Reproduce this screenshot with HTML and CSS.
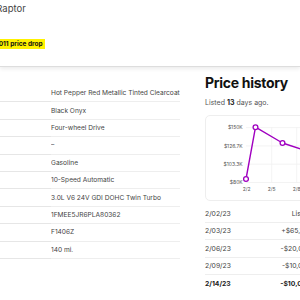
FILE: index.html
```html
<!DOCTYPE html>
<html lang="en">
<head>
    <meta charset="UTF-8">
    <meta name="viewport" content="width=device-width, initial-scale=1.0">
    <title>2023 Ford F-150 Raptor</title>
    <link rel="stylesheet" href="styles.css">
</head>
<body>
    <header class="topbar">
        <div class="title">2023 Ford F-150 Raptor</div>
        <div class="badge-row"><span class="badge">$45,011 price drop</span></div>
    </header>

    <main class="main">
        <table class="specs">
            <colgroup>
                <col class="label-col">
                <col>
            </colgroup>
            <tbody>
                <tr><td class="label">Exterior color</td><td>Hot Pepper Red Metallic Tinted Clearcoat</td></tr>
                <tr><td class="label">Interior color</td><td>Black Onyx</td></tr>
                <tr><td class="label">Drivetrain</td><td>Four-wheel Drive</td></tr>
                <tr><td class="label">MPG</td><td>–</td></tr>
                <tr><td class="label">Fuel type</td><td>Gasoline</td></tr>
                <tr><td class="label">Transmission</td><td>10-Speed Automatic</td></tr>
                <tr><td class="label">Engine</td><td>3.0L V6 24V GDI DOHC Twin Turbo</td></tr>
                <tr><td class="label">VIN</td><td>1FMEE5JR6PLA80362</td></tr>
                <tr><td class="label">Stock #</td><td>F1406Z</td></tr>
                <tr><td class="label">Mileage</td><td>140 mi.</td></tr>
            </tbody>
        </table>

        <section class="side">
            <h2 class="side-title">Price history</h2>
            <p class="listed">Listed <b>13</b> days ago.</p>

            <div class="chart-card">
                <svg class="chart" width="180" height="84" viewBox="0 0 180 84">
                    <!-- grid -->
                    <g class="grid">
                        <line x1="40" y1="11.6" x2="180" y2="11.6"/>
                        <line x1="40" y1="29.9" x2="180" y2="29.9"/>
                        <line x1="40" y1="48.2" x2="180" y2="48.2"/>
                        <line x1="40" y1="66.5" x2="180" y2="66.5"/>
                        <line x1="65.7" y1="11.6" x2="65.7" y2="66.5"/>
                        <line x1="90.7" y1="11.6" x2="90.7" y2="66.5"/>
                    </g>
                    <g class="axis">
                        <text x="36.7" y="13.4" text-anchor="end">$150K</text>
                        <text x="36.7" y="31.7" text-anchor="end">$126.7K</text>
                        <text x="36.7" y="50" text-anchor="end">$103.3K</text>
                        <text x="36.7" y="68.3" text-anchor="end">$80K</text>
                        <text x="40.7" y="75.3" text-anchor="middle">2/2</text>
                        <text x="65.7" y="75.3" text-anchor="middle">2/5</text>
                        <text x="90.7" y="75.3" text-anchor="middle">2/8</text>
                    </g>
                    <polyline class="price-line" points="40,63 49.5,11.2 76.5,27 99,34.5 140.7,42.3"/>
                    <g class="dots">
                        <circle cx="40" cy="63" r="2.4"/>
                        <circle cx="49.5" cy="11.2" r="2.4"/>
                        <circle cx="76.5" cy="27" r="2.4"/>
                        <circle cx="99" cy="34.5" r="2.4"/>
                        <circle cx="140.7" cy="42.3" r="2.4"/>
                    </g>
                </svg>
            </div>

            <table class="history">
                <tbody>
                    <tr><td>2/02/23</td><td class="change">Listed</td><td class="price">$85,489</td></tr>
                    <tr><td>2/03/23</td><td class="change">+$65,100</td><td class="price">$150,589</td></tr>
                    <tr><td>2/06/23</td><td class="change">-$20,000</td><td class="price">$130,589</td></tr>
                    <tr><td>2/09/23</td><td class="change">-$10,000</td><td class="price">$120,589</td></tr>
                    <tr class="current"><td>2/14/23</td><td class="change">-$10,000</td><td class="price">$110,589</td></tr>
                </tbody>
            </table>
        </section>
    </main>
</body>
</html>
```

FILE: styles.css
```css
html, body {
    overflow: hidden;
}

body {
    margin: 0;
    font-family: Inter, "Open Sans", sans-serif;
    color: #333;
    background: #fff;
}

.topbar {
    height: 66px;
    border-bottom: 1px solid #ddd;
    box-shadow: 0 2px 4px rgba(0, 0, 0, 0.08);
    overflow: hidden;
}

.title {
    margin-left: -81px;
    padding-top: 3px;
    font-size: 9.5px;
    color: #444;
    white-space: nowrap;
}

.badge-row {
    margin-top: 16px;
    margin-left: -18px;
    white-space: nowrap;
}

.badge {
    background: #fff200;
    padding: 1px 2px;
    font-size: 6.5px;
    font-weight: 700;
    color: #111;
}

.main {
    display: flex;
    align-items: flex-start;
    gap: 25px;
}

.specs {
    flex: none;
    width: 233px;
    margin-left: -53px;
    margin-top: 18px;
    table-layout: fixed;
    border-collapse: collapse;
    font-size: 6.6px;
    color: #444;
}

.label-col {
    width: 104px;
}

.specs td {
    height: 16.4px;
    padding: 0;
    border-bottom: 1px solid #eee;
    white-space: nowrap;
    overflow: hidden;
}

.specs td.label {
    color: #fff;
    border-bottom-color: #e6e6e6;
}

.side {
    flex: none;
    width: 200px;
}

.side-title {
    margin: 6px 0 0;
    font-size: 14px;
    font-weight: 700;
    color: #111;
    line-height: 20px;
    letter-spacing: -0.3px;
}

.listed {
    margin: 5px 0 0;
    font-size: 7px;
    color: #555;
}

.listed b {
    color: #222;
}

.chart-card {
    margin-top: 8px;
    height: 84px;
    border: 1px solid #eee;
    border-radius: 5px;
    overflow: hidden;
}

.chart {
    display: block;
}

.grid line {
    stroke: #f0f0f0;
    stroke-width: 0.8;
}

.axis text {
    font-size: 5px;
    fill: #555;
    font-family: Inter, sans-serif;
}

.price-line {
    fill: none;
    stroke: #a000c0;
    stroke-width: 1.4;
    stroke-linejoin: round;
}

.dots circle {
    fill: #fff;
    stroke: #a000c0;
    stroke-width: 1.3;
}

.history {
    width: 146px;
    margin-top: 4px;
    table-layout: fixed;
    border-collapse: collapse;
    font-size: 6.8px;
    color: #444;
}

.history td {
    height: 16.5px;
    padding: 0;
    border-bottom: 1px solid #eee;
    white-space: nowrap;
}

.history td.change {
    text-align: right;
}

.history td.price {
    text-align: right;
    width: 40px;
}

.history tr.current td {
    font-weight: 700;
    color: #222;
    border-bottom: none;
}
```
